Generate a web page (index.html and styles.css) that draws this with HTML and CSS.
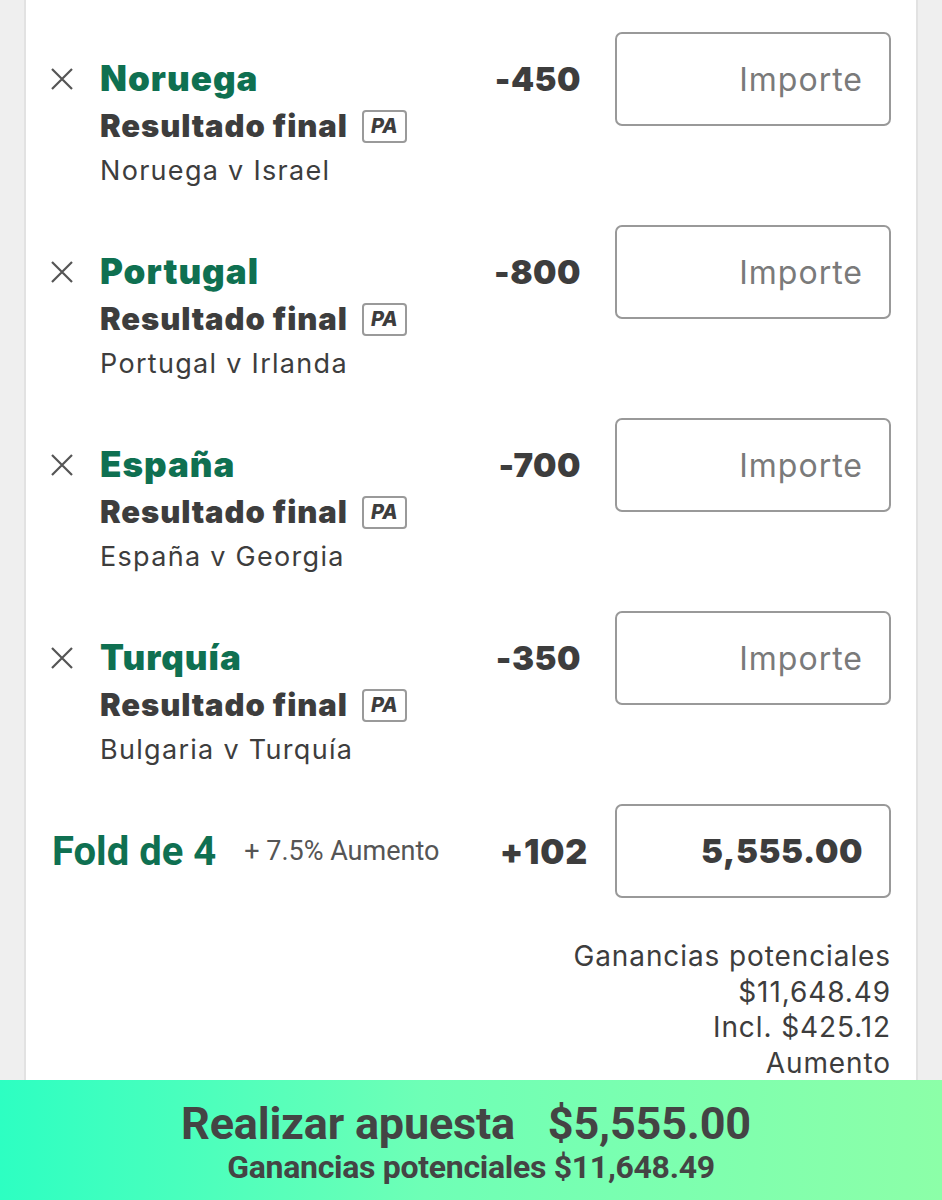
FILE: index.html
```html
<!DOCTYPE html>
<html lang="es">
  <head>
    <meta charset="utf-8">
    <title>Boleto de apuestas</title>
    <link rel="stylesheet" href="styles.css">
  </head>
  <body>
    <div id="betslip">
      <div class="bet_row">
        <div class="remove"><svg viewBox="0 0 24 24" width="24" height="24"><path d="M2 2L22 22M22 2L2 22"/></svg></div>
        <div class="pick">
          <div class="team">Noruega</div>
          <div class="market">Resultado final <span class="badge">PA</span></div>
          <div class="event">Noruega v Israel</div>
        </div>
        <div class="odds">-450</div>
        <div class="stake"><span class="placeholder">Importe</span></div>
      </div>

      <div class="bet_row">
        <div class="remove"><svg viewBox="0 0 24 24" width="24" height="24"><path d="M2 2L22 22M22 2L2 22"/></svg></div>
        <div class="pick">
          <div class="team">Portugal</div>
          <div class="market">Resultado final <span class="badge">PA</span></div>
          <div class="event">Portugal v Irlanda</div>
        </div>
        <div class="odds">-800</div>
        <div class="stake"><span class="placeholder">Importe</span></div>
      </div>

      <div class="bet_row">
        <div class="remove"><svg viewBox="0 0 24 24" width="24" height="24"><path d="M2 2L22 22M22 2L2 22"/></svg></div>
        <div class="pick">
          <div class="team">España</div>
          <div class="market">Resultado final <span class="badge">PA</span></div>
          <div class="event">España v Georgia</div>
        </div>
        <div class="odds">-700</div>
        <div class="stake"><span class="placeholder">Importe</span></div>
      </div>

      <div class="bet_row">
        <div class="remove"><svg viewBox="0 0 24 24" width="24" height="24"><path d="M2 2L22 22M22 2L2 22"/></svg></div>
        <div class="pick">
          <div class="team">Turquía</div>
          <div class="market">Resultado final <span class="badge">PA</span></div>
          <div class="event">Bulgaria v Turquía</div>
        </div>
        <div class="odds">-350</div>
        <div class="stake"><span class="placeholder">Importe</span></div>
      </div>

      <div class="bet_row fold_row">
        <div class="fold_title">
          <span class="fold_name">Fold de 4</span>
          <span class="boost">+ 7.5% Aumento</span>
        </div>
        <div class="odds">+102</div>
        <div class="stake"><span class="amount">5,555.00</span></div>
      </div>

      <div class="potential">
        <div>Ganancias potenciales</div>
        <div>$11,648.49</div>
        <div>Incl. $425.12</div>
        <div>Aumento</div>
      </div>
    </div>

    <div id="place_bet">
      <div class="place_main">Realizar apuesta&nbsp;&nbsp; $5,555.00</div>
      <div class="place_sub">Ganancias potenciales $11,648.49</div>
    </div>
  </body>
</html>
```

FILE: styles.css
```css
body {
  margin: 0;
  padding: 0;
  background-color: #efefef;
  font-family: Inter, "Liberation Sans", sans-serif;
  color: #3d3d3d;
}

#betslip {
  margin: 0 24px;
  padding: 32px 25px 0 24px;
  background-color: #ffffff;
  border-left: 2px solid #e2e2e2;
  border-right: 2px solid #e2e2e2;
}

.bet_row {
  display: flex;
  align-items: flex-start;
  height: 193px;
}

.remove {
  width: 26px;
  height: 94px;
  display: flex;
  align-items: center;
  margin-right: 24px;
}

.remove svg {
  display: block;
  fill: none;
  stroke: #555555;
  stroke-width: 2.2;
}

.pick {
  flex: 1;
  padding-top: 22px;
}

.team {
  font-size: 35px;
  font-weight: 900;
  line-height: 48px;
  letter-spacing: 1px;
  color: #0f7051;
}

.market {
  display: flex;
  align-items: center;
  font-size: 31px;
  font-weight: 900;
  line-height: 48px;
  letter-spacing: 0.9px;
}

.badge {
  display: inline-flex;
  align-items: center;
  justify-content: center;
  width: 41px;
  height: 29px;
  margin-left: 14px;
  border: 2px solid #9a9a9a;
  border-radius: 4px;
  font-size: 20px;
  font-style: italic;
  font-weight: 800;
  letter-spacing: 0;
}

.event {
  font-size: 27px;
  line-height: 42px;
  letter-spacing: 1.3px;
}

.odds {
  height: 94px;
  display: flex;
  align-items: center;
  margin-right: 34px;
  font-size: 33px;
  font-weight: 900;
  letter-spacing: 0.5px;
}

.stake {
  height: 90px;
  border: 2px solid #999999;
  border-radius: 7px;
  display: flex;
  align-items: center;
  justify-content: flex-end;
  padding-right: 26px;
  box-sizing: content-box;
  width: 246px;
}

.placeholder {
  font-size: 32px;
  letter-spacing: 1px;
  color: #7a7a7a;
}

.amount {
  font-size: 33px;
  font-weight: 900;
  letter-spacing: 0.6px;
}

.fold_row .odds {
  margin-right: 27px;
  font-size: 34px;
  letter-spacing: 0.8px;
}

.fold_title {
  flex: 1;
  height: 94px;
  display: flex;
  align-items: center;
  margin-left: 2px;
  font-family: Roboto, "Liberation Sans", sans-serif;
}

.fold_name {
  font-size: 40px;
  font-weight: 700;
  color: #0f7051;
  margin-right: 28px;
}

.boost {
  font-size: 27px;
  color: #555555;
}

.potential {
  margin-top: -58px;
  text-align: right;
  font-size: 28px;
  line-height: 35.5px;
  letter-spacing: 0.9px;
  height: 141px;
}

#place_bet {
  height: 120px;
  background: linear-gradient(to right, #2dffc2 0%, #6effb6 45%, #8cffa8 100%);
  text-align: center;
  color: #444444;
  font-family: Roboto, "Liberation Sans", sans-serif;
  font-weight: 700;
  padding-top: 19px;
  box-sizing: border-box;
}

.place_main {
  font-size: 45px;
  line-height: 50px;
  letter-spacing: -0.2px;
  padding-right: 10px;
}

.place_sub {
  font-size: 32px;
  line-height: 36px;
  letter-spacing: -0.3px;
}
```
